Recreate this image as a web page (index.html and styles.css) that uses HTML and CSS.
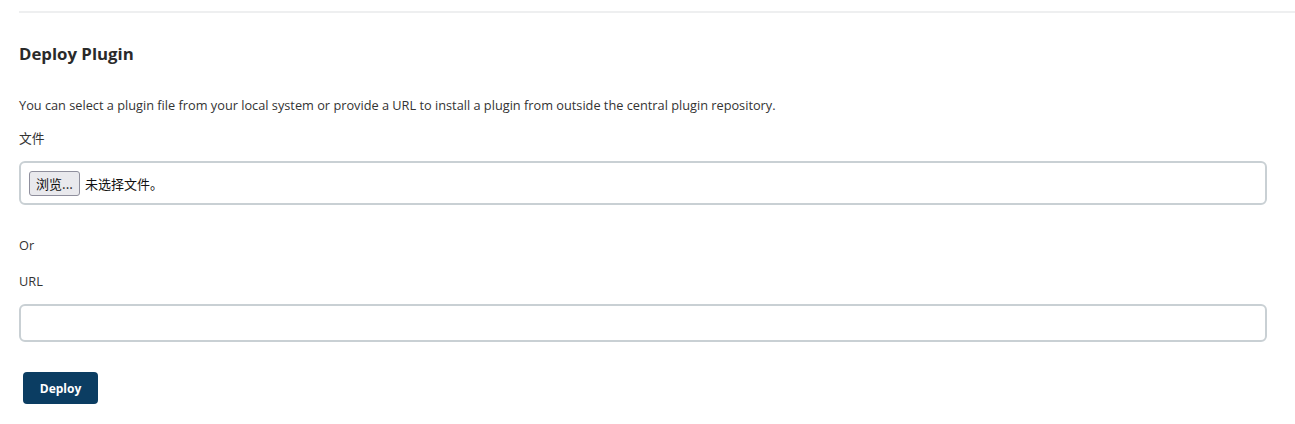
FILE: index.html
```html
<!DOCTYPE html>
<html>
<head>
<meta charset="utf-8">
<link rel="stylesheet" href="styles.css">
</head>
<body>
<div class="page">
  <hr class="sep">
  <h2 class="title">Deploy Plugin</h2>
  <p class="desc">You can select a plugin file from your local system or provide a URL to install a plugin from outside the central plugin repository.</p>
  <div class="label">文件</div>
  <div class="filebox">
    <span class="browse">浏览...</span><span class="nofile">未选择文件。</span>
  </div>
  <div class="or">Or</div>
  <div class="label label-url">URL</div>
  <div class="urlbox"></div>
  <button class="deploy">Deploy</button>
</div>
</body>
</html>
```
FILE: styles.css
```css
html, body {
  margin: 0;
  padding: 0;
  background: #fff;
}
body {
  font-family: "Open Sans", "Noto Sans CJK SC", sans-serif;
  color: #333;
}
.page {
  padding: 11px 0 0 19px;
}
.sep {
  margin: 0;
  border: 0;
  height: 2px;
  background: #eeeff0;
}
.title {
  margin: 29px 0 0 0;
  font-size: 16.8px;
  font-weight: 700;
  line-height: 24px;
  color: #2a2a2a;
}
.desc {
  margin: 30px 0 0 0;
  font-size: 12.75px;
  line-height: 18px;
}
.label {
  font-size: 12.75px;
  line-height: 18px;
  margin-top: 15px;
}
.label-url {
  margin-top: 18px;
}
.filebox {
  box-sizing: border-box;
  width: 1248px;
  height: 44px;
  margin-top: 14px;
  border: 2px solid #c9d0d4;
  border-radius: 6px;
  display: flex;
  align-items: center;
  padding-left: 8px;
  font-family: "Noto Sans CJK SC", sans-serif;
  font-size: 13px;
  color: #111;
}
.browse {
  box-sizing: border-box;
  height: 25px;
  width: 51px;
  justify-content: center;
  border: 1px solid #8f8f9d;
  border-radius: 3px;
  background: #e9e9ed;
  display: flex;
  align-items: center;
  margin-right: 5px;
}
.or {
  font-size: 12.75px;
  line-height: 18px;
  margin-top: 31px;
}
.urlbox {
  box-sizing: border-box;
  width: 1248px;
  height: 38px;
  margin-top: 14px;
  border: 2px solid #c9d0d4;
  border-radius: 6px;
}
.deploy {
  display: block;
  margin: 30px 0 0 4px;
  width: 75px;
  height: 32px;
  border: 0;
  border-radius: 4px;
  background: #0b3d62;
  color: #fff;
  font-family: "Open Sans", sans-serif;
  font-weight: 700;
  font-size: 12px;
  padding: 0;
}
```
